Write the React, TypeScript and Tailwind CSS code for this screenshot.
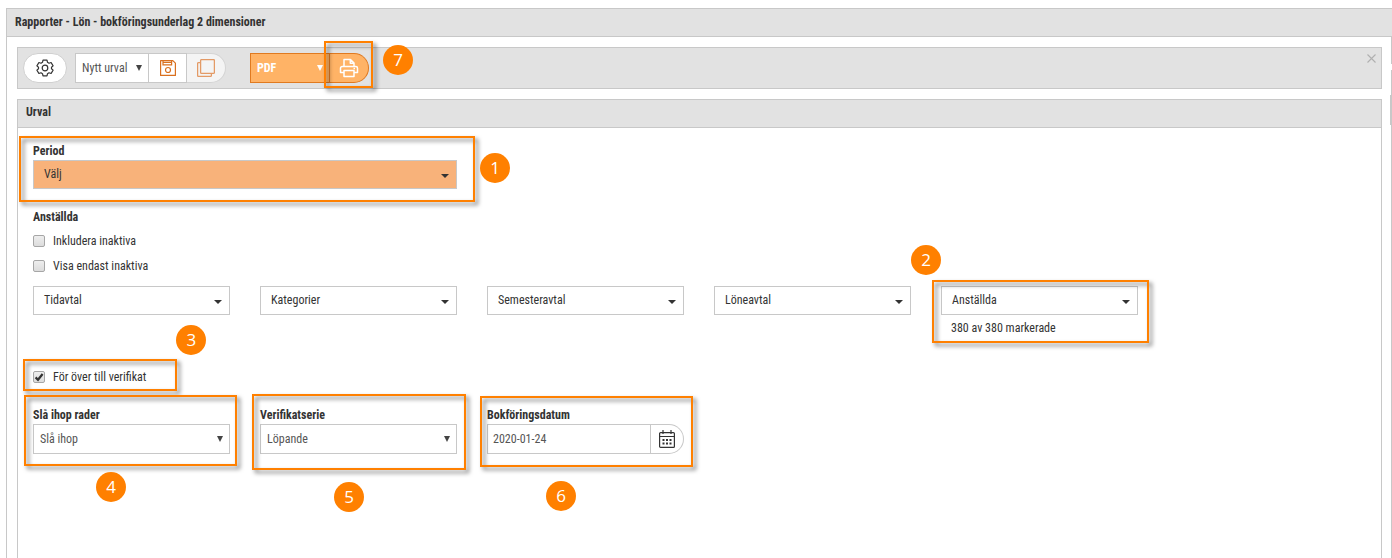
import type { ReactNode } from "react";

function Callout({ className }: { className: string }) {
  return (
    <span
      aria-hidden="true"
      className={`pointer-events-none absolute z-10 border-2 border-[#ff8000] drop-shadow-[3px_3px_2px_rgba(0,0,0,0.55)] ${className}`}
    />
  );
}

function Badge({ n, className }: { n: number; className: string }) {
  return (
    <span
      className={`pointer-events-none absolute z-20 flex size-[30px] items-center justify-center rounded-full bg-[#ff8000] pb-px font-['Open_Sans',sans-serif] text-[17px] leading-none text-white ${className}`}
    >
      {n}
    </span>
  );
}

function Caret() {
  return (
    <svg width="8" height="4" viewBox="0 0 8 4" className="mt-1 shrink-0 fill-[#333]" aria-hidden="true">
      <path d="M0 0h8L4 4z" />
    </svg>
  );
}

function SelectArrow({ className }: { className: string }) {
  return (
    <svg
      width="6"
      height="6"
      viewBox="0 0 6 6"
      className={`pointer-events-none absolute inset-y-0 my-auto ${className}`}
      aria-hidden="true"
    >
      <path d="M0 0h6L3 6z" />
    </svg>
  );
}

function Dropdown({ id, label, className = "bg-white" }: { id?: string; label: string; className?: string }) {
  return (
    <button
      id={id}
      type="button"
      className={`flex h-[29px] w-full items-center justify-between border border-[#c8c8c8] pr-[7px] pb-px pl-[10px] text-left ${className}`}
    >
      <span>{label}</span>
      <Caret />
    </button>
  );
}

function Check({ label, checked = false }: { label: string; checked?: boolean }) {
  return (
    <label className="flex h-[25px] w-fit items-center gap-2 pb-px">
      <span className="relative flex size-3">
        <input
          type="checkbox"
          defaultChecked={checked}
          className="peer size-3 appearance-none rounded-[2px] border border-[#a6a6a6] bg-linear-to-b from-[#eeeeee] to-[#dcdcdc]"
        />
        <svg
          viewBox="0 0 12 12"
          className="pointer-events-none absolute inset-0 hidden size-3 peer-checked:block"
          aria-hidden="true"
        >
          <path d="M2.6 6.4 5 8.8 9.6 3" fill="none" stroke="#333" strokeWidth="2.2" />
        </svg>
      </span>
      {label}
    </label>
  );
}

function FieldLabel({ htmlFor, children }: { htmlFor: string; children: ReactNode }) {
  return (
    <label htmlFor={htmlFor} className="block leading-[18px] font-bold">
      {children}
    </label>
  );
}

function NativeSelect({ id, value }: { id: string; value: string }) {
  return (
    <div className="relative">
      <select
        id={id}
        className="block h-[30px] w-full appearance-none border border-[#c8c8c8] bg-white px-[6px] text-[#555]"
      >
        <option>{value}</option>
      </select>
      <SelectArrow className="right-[7px] fill-[#444]" />
    </div>
  );
}

function Toolbar() {
  return (
    <div className="relative flex h-[42px] items-center border border-[#c8c8c8] bg-[#e2e2e2] pl-[5px]">
      <button
        type="button"
        aria-label="Inställningar"
        className="flex h-[30px] w-[44px] items-center justify-center rounded-full border border-[#d0d0d0] bg-white"
      >
        <svg width="18" height="18" viewBox="0 0 18 18" fill="none" stroke="#333" strokeWidth="1.2" strokeLinejoin="round" aria-hidden="true">
          <path d="M7 1.2h4l.5 2.1 1.5.9 2.1-.7 2 3.4L15.500 8.300v1.400l1.600 1.400-2 3.400-2.100-.7-1.500.9-.5 2.100H7l-.5-2.100-1.500-.9-2.100.7-2-3.400 1.600-1.400V8.300L.9 6.900l2-3.400 2.100.7 1.500-.9z" />
          <circle cx="9" cy="9" r="2.800" />
        </svg>
      </button>

      <div className="ml-2 flex h-[30px]">
        <div className="relative">
          <select
            aria-label="Urval"
            className="block h-[30px] w-[74px] appearance-none border border-[#c8c8c8] bg-white pl-[6px] text-[#555]"
          >
            <option>Nytt urval</option>
          </select>
          <SelectArrow className="right-[7px] fill-[#444]" />
        </div>
        <button
          type="button"
          aria-label="Spara"
          className="flex w-[38px] items-center justify-center border-y border-r border-[#c8c8c8] bg-white"
        >
          <svg width="16" height="16" viewBox="0 0 16 16" fill="none" stroke="#d9701f" strokeWidth="1.2" aria-hidden="true">
            <path d="M.6.6h12.200l2.600 2.600v12.200H.6z" strokeLinejoin="round" />
            <path d="M3 .6v4.200h8.600V.6M3 2.400h8.600" />
            <circle cx="8" cy="10" r="2.500" />
          </svg>
        </button>
        <button
          type="button"
          aria-label="Kopiera"
          disabled
          className="flex w-[39px] items-center justify-center rounded-r-full border-y border-r border-[#d4d4d4] bg-[#f4f4f4]"
        >
          <svg width="18" height="18" viewBox="0 0 18 18" fill="none" stroke="#e39a66" strokeWidth="1.300" strokeLinejoin="round" aria-hidden="true">
            <rect x="3.600" y=".6" width="13.800" height="13.800" rx="1" />
            <path d="M3.600 3.600H1.600a1 1 0 0 0-1 1v11.800a1 1 0 0 0 1 1h11.800a1 1 0 0 0 1-1v-2" />
          </svg>
        </button>
      </div>

      <div className="ml-6 flex h-[30px]">
        <div className="relative">
          <select
            aria-label="Format"
            className="block h-[30px] w-[80px] appearance-none border border-[#e07a20] bg-[#ffb366] pl-[6px] font-bold text-white"
          >
            <option>PDF</option>
          </select>
          <SelectArrow className="right-[7px] fill-white" />
        </div>
        <div className="relative flex">
          <button
            type="button"
            aria-label="Skriv ut"
            className="flex w-[39px] items-center justify-center rounded-r-full border-y border-r border-[#e07a20] bg-[#ffb366]"
          >
            <svg width="20" height="20" viewBox="0 0 20 20" fill="none" stroke="#fff" strokeWidth="1.500" strokeLinejoin="round" aria-hidden="true">
              <path d="M5 8.500V1.500h6.500L15 5v3.500M11.300 1.800V5.200H15" />
              <path d="M5 14.500H1.500v-4.300A1.700 1.700 0 0 1 3.200 8.500h13.600a1.700 1.700 0 0 1 1.700 1.700v4.300H15" />
              <path d="M5 12.500h10v6H5z" />
              <path d="M14.500 10.500h1.500" />
            </svg>
          </button>
          <Callout className="-top-3 -right-1 -bottom-[5px] -left-[6px]" />
          <Badge n={7} className="-top-2 left-[53px]" />
        </div>
      </div>

      <button type="button" aria-label="Stäng" className="ml-auto self-start p-[6px] pr-[5px]">
        <svg width="9" height="9" viewBox="0 0 9 9" stroke="#b0b0b0" strokeWidth="1.100" aria-hidden="true">
          <path d="M.5.5l8 8M8.500.5l-8 8" />
        </svg>
      </button>
    </div>
  );
}

export default function App() {
  return (
    <div className="flex min-h-screen flex-col bg-white pt-2 pl-[6px] font-['Roboto_Condensed',Roboto,sans-serif] text-[12px] leading-[18px] text-[#333]">
      <h1 className="flex h-[29px] items-center border border-r-0 border-[#c8c8c8] bg-[#e2e2e2] px-2 pb-px font-bold">
        Rapporter - Lön - bokföringsunderlag 2 dimensioner
      </h1>
      <main className="relative flex flex-1 flex-col gap-[10px] border-x border-[#c8c8c8] pt-[10px] pr-[9px] pl-[10px]">
        <Toolbar />

        <section className="flex flex-1 flex-col border border-b-0 border-[#c8c8c8]">
          <h2 className="flex h-7 items-center border-b border-[#c8c8c8] bg-[#e2e2e2] px-2 pb-[3px] font-bold">Urval</h2>

          <form className="pt-[14px] pr-4 pl-[15px]">
            <div className="grid grid-cols-6 gap-x-[30px]">
              <div className="relative col-span-2">
                <FieldLabel htmlFor="period">Period</FieldLabel>
                <Dropdown id="period" label="Välj" className="bg-[#f8b27a]" />
                <Callout className="-top-[6px] -right-[18px] -bottom-[13px] -left-[14px]" />
                <Badge n={1} className="top-[11px] -right-[53px]" />
              </div>
            </div>

            <fieldset className="mt-[19px]">
              <legend className="mb-[3px] font-bold">Anställda</legend>
              <Check label="Inkludera inaktiva" />
              <Check label="Visa endast inaktiva" />
              <div className="mt-[7px] grid grid-cols-6 gap-x-[30px]">
                <Dropdown label="Tidavtal" />
                <Dropdown label="Kategorier" />
                <Dropdown label="Semesteravtal" />
                <Dropdown label="Löneavtal" />
                <div className="relative">
                  <Dropdown label="Anställda" />
                  <p className="mt-1 pl-[10px]">380 av 380 markerade</p>
                  <Callout className="-top-[6px] -right-[11px] -bottom-[6px] -left-[9px]" />
                  <Badge n={2} className="-top-[41px] -left-[30px]" />
                </div>
              </div>
            </fieldset>

            <div className="relative mt-7 w-fit">
              <Check label="För över till verifikat" checked />
              <Callout className="-top-[6px] -right-[31px] -bottom-px -left-[10px]" />
              <Badge n={3} className="-top-10 -right-[60px]" />
            </div>

            <div className="mt-4 grid grid-cols-6 gap-x-[30px]">
              <div className="relative">
                <FieldLabel htmlFor="merge">Slå ihop rader</FieldLabel>
                <NativeSelect id="merge" value="Slå ihop" />
                <Callout className="-top-[11px] -right-[7px] -bottom-3 -left-[9px]" />
                <Badge n={4} className="-bottom-12 left-[63px]" />
              </div>
              <div className="relative">
                <FieldLabel htmlFor="series">Verifikatserie</FieldLabel>
                <NativeSelect id="series" value="Löpande" />
                <Callout className="-top-3 -right-[9px] -bottom-4 -left-2" />
                <Badge n={5} className="-bottom-[58px] left-[74px]" />
              </div>
              <div className="relative">
                <FieldLabel htmlFor="date">Bokföringsdatum</FieldLabel>
                <div className="flex h-[30px]">
                  <input
                    id="date"
                    type="text"
                    defaultValue="2020-01-24"
                    className="w-0 flex-1 border border-[#c8c8c8] bg-white px-[5px] text-[#555]"
                  />
                  <button
                    type="button"
                    aria-label="Välj datum"
                    className="flex w-[33px] items-center justify-center rounded-r-full border-y border-r border-[#c8c8c8] bg-white"
                  >
                    <svg width="16" height="18" viewBox="0 0 16 18" fill="none" stroke="#333" strokeWidth="1.200" aria-hidden="true">
                      <rect x=".6" y="2.600" width="14.800" height="14.800" rx="1" />
                      <path d="M.6 6.500h14.800M4 0v4M12 0v4" />
                      <path d="M3.500 10h2M7 10h2M10.500 10h2M3.500 13.500h2M7 13.500h2M10.500 13.500h2" strokeWidth="2" />
                    </svg>
                  </button>
                </div>
                <Callout className="-top-[10px] -right-[9px] -bottom-[13px] -left-[7px]" />
                <Badge n={6} className="-bottom-[57px] left-[59px]" />
              </div>
            </div>
          </form>
        </section>

        <span aria-hidden="true" className="absolute top-[27px] -right-px h-[6px] w-[2px] bg-white" />
        <span aria-hidden="true" className="absolute top-[58px] -right-px h-[30px] w-[2px] bg-[#c8c8c8]" />
      </main>
    </div>
  );
}
